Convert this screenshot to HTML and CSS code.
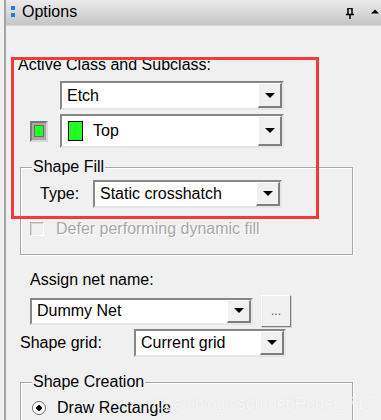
FILE: index.html
```html
<!DOCTYPE html>

<html lang="en">

    <head>
        <meta charset="UTF-8">
        <meta name="viewport" content="width=device-width, initial-scale=1.0">
        <title>Options</title>
        <link rel="stylesheet" href="styles.css">
    </head>

    <body>
        <div class="dock">
            <header class="titleBar">
                <span class="grip"><i></i><i></i></span>
                <span class="title">Options</span>
                <svg class="pin" width="8" height="11" viewBox="0 0 8 11">
                    <path d="M2 0.5h4v6h-4z M0 6.5h8 M4 6.5v4.5" fill="none" stroke="#000" stroke-width="1.5"/>
                </svg>
                <svg class="collapse" width="8" height="5" viewBox="0 0 8 5">
                    <path d="M0 4.5L4 0.5L8 4.5z" fill="#000"/>
                </svg>
            </header>

            <div class="content">
                <div class="label first">Active Class and Subclass:</div>

                <div class="classRow">
                    <div class="combo etch">
                        <span class="comboText">Etch</span>
                        <span class="dropButton"><i></i></span>
                    </div>
                </div>
                <div class="classRow">
                    <span class="swatchButton"><i></i></span>
                    <div class="combo subclass">
                        <span class="comboText"><i class="colorChip"></i>Top</span>
                        <span class="dropButton"><i></i></span>
                    </div>
                </div>

                <section class="groupBox shapeFill">
                    <span class="legend">Shape Fill</span>
                    <div class="fillRow">
                        <span class="rowLabel typeLabel">Type:</span>
                        <div class="combo typeCombo">
                            <span class="comboText">Static crosshatch</span>
                            <span class="dropButton"><i></i></span>
                        </div>
                    </div>
                    <div class="check disabled">
                        <span class="checkBox"></span>
                        Defer performing dynamic fill
                    </div>
                </section>

                <div class="label netLabel">Assign net name:</div>
                <div class="netRow">
                    <div class="combo netCombo">
                        <span class="comboText">Dummy Net</span>
                        <span class="dropButton"><i></i></span>
                    </div>
                    <button class="browse">...</button>
                </div>
                <div class="gridRow">
                    <span class="rowLabel gridLabel">Shape grid:</span>
                    <div class="combo gridCombo">
                        <span class="comboText">Current grid</span>
                        <span class="dropButton"><i></i></span>
                    </div>
                </div>

                <section class="groupBox shapeCreation">
                    <span class="legend">Shape Creation</span>
                    <div class="radio">
                        <span class="radioDot"></span>
                        Draw Rectangle
                    </div>
                </section>
            </div>
        </div>

        <!-- annotation drawn over the screenshot -->
        <div class="highlight"></div>
        <div class="watermark">https://blog.csdn.net/Roger_717</div>
    </body>

</html>
```

FILE: styles.css
```css
body {
    margin: 0px;
    padding: 0px;
    width: 381px;
    height: 420px;
    overflow: hidden;
    position: relative;
    background-color: #f0f0f0;
    font-family: "Liberation Sans", Arial, sans-serif;
    font-size: 16px;
    color: #000;
}

.dock {
    margin-left: 4px;
    height: 420px;
    border-left: 2px solid #a3a3a3;
    overflow: hidden;
}

/* title bar */
.titleBar {
    height: 26px;
    display: flex;
    align-items: center;
    padding-left: 5px;
    padding-right: 2px;
    background: linear-gradient(#ebebeb, #c5c5c5);
    border-bottom: 1px solid #d6d6d6;
    box-sizing: border-box;
}

.grip {
    display: flex;
    flex-direction: column;
    gap: 3px;
    width: 4px;
    margin-right: 7px;
    margin-top: -2px;
}

.grip i {
    display: block;
    width: 4px;
    height: 4px;
    background-color: #1a7ee0;
}

.title {
    flex: 1;
    margin-top: -2px;
}

.pin {
    margin-right: 17px;
    margin-top: 2px;
}

.collapse {
    margin-top: -3px;
}

/* panel content */
.content {
    padding-left: 12px;
}

.label {
    line-height: 18px;
}

.first {
    margin-top: 30px;
}

.classRow {
    display: flex;
    align-items: center;
    margin-left: 12px;
    margin-top: 4px;
}

.classRow:nth-of-type(2) {
    margin-top: 7px;
}

.etch {
    margin-left: 30px;
}

.swatchButton {
    width: 18px;
    height: 21px;
    box-sizing: border-box;
    border: 2px solid;
    border-color: #7a7a7a #d8d8d8 #d8d8d8 #7a7a7a;
    background-color: #a8a8a8;
    display: flex;
    justify-content: center;
    align-items: center;
    margin-right: 12px;
}

.swatchButton i {
    width: 10px;
    height: 12px;
    background-color: #22ff22;
    border: 1px solid #6b6b6b;
    box-sizing: border-box;
}

/* combo boxes */
.combo {
    display: flex;
    height: 29px;
    box-sizing: border-box;
    border: 2px solid;
    border-color: #878787 #e6e6e6 #e6e6e6 #878787;
    background-color: #ffffff;
    width: 224px;
}

.subclass {
    height: 34px;
}

.comboText {
    flex: 1;
    display: flex;
    align-items: center;
    padding-left: 5px;
    white-space: nowrap;
    overflow: hidden;
}

.colorChip {
    width: 15px;
    height: 20px;
    box-sizing: border-box;
    border: 1px solid #000;
    background-color: #22ff22;
    margin-left: 1px;
    margin-right: 10px;
}

.dropButton {
    width: 24px;
    box-sizing: border-box;
    background-color: #f0f0f0;
    border-top: 1px solid #ffffff;
    border-left: 1px solid #ffffff;
    border-right: 2px solid #7e7e7e;
    border-bottom: 2px solid #7e7e7e;
    display: flex;
    justify-content: center;
    align-items: center;
}

.dropButton i {
    width: 0;
    height: 0;
    border-left: 5px solid transparent;
    border-right: 5px solid transparent;
    border-top: 5px solid #000;
}

/* group boxes */
.groupBox {
    display: block;
    margin-left: 2px;
    width: 333px;
    box-sizing: border-box;
    border: 1px solid #a6a6a6;
    box-shadow: inset 1px 1px #ffffff, 1px 1px #ffffff;
}

.legend {
    display: block;
    width: fit-content;
    line-height: 18px;
    margin-top: -10px;
    margin-left: 11px;
    padding: 0 1px;
    background-color: #f0f0f0;
}

.shapeFill {
    margin-top: 19px;
    height: 88px;
}

.fillRow {
    display: flex;
    align-items: center;
    margin-top: 4px;
}

.rowLabel {
    line-height: 18px;
}

.typeLabel {
    margin-left: 19px;
    width: 53px;
}

.typeCombo {
    width: 189px;
    height: 28px;
}

.check {
    display: flex;
    align-items: center;
    margin-top: 12px;
    margin-left: 9px;
    line-height: 18px;
}

.checkBox {
    width: 14px;
    height: 14px;
    box-sizing: border-box;
    border: 1px solid;
    border-color: #b4b4b4 #ffffff #ffffff #b4b4b4;
    box-shadow: inset 1px 1px #d8d8d8;
    margin-right: 12px;
}

.disabled {
    color: #a8a8a8;
    text-shadow: 1px 1px #ffffff;
}

.netLabel {
    margin-top: 16px;
    margin-left: 12px;
}

.netRow {
    display: flex;
    align-items: center;
    margin-top: 6px;
    margin-left: 12px;
    height: 32px;
}

.netCombo {
    width: 223px;
    height: 27px;
}

.browse {
    width: 30px;
    height: 32px;
    margin-left: 8px;
    padding: 0;
    background-color: #f0f0f0;
    border: 1px solid;
    border-color: #ffffff #7e7e7e #7e7e7e #ffffff;
    box-shadow: 1px 1px #d0d0d0;
    font-family: "Liberation Sans", Arial, sans-serif;
    font-size: 12px;
    color: #555;
}

.gridRow {
    display: flex;
    align-items: center;
    margin-top: 2px;
    margin-left: 2px;
}

.gridLabel {
    width: 114px;
}

.gridCombo {
    width: 152px;
    height: 28px;
}

.shapeCreation {
    margin-top: 25px;
    height: 50px;
}

.radio {
    display: flex;
    align-items: center;
    margin-top: 8px;
    margin-left: 11px;
    line-height: 18px;
}

.radioDot {
    width: 14px;
    height: 14px;
    box-sizing: border-box;
    border-radius: 50%;
    border: 1px solid #6d6d6d;
    background: radial-gradient(circle, #000 2.5px, #ffffff 3px);
    margin-right: 11px;
}

/* overlays */
.highlight {
    position: absolute;
    left: 11px;
    top: 57px;
    width: 308px;
    height: 162px;
    box-sizing: border-box;
    border: 3px solid #f23a3a;
}

.watermark {
    position: absolute;
    left: 147px;
    top: 395px;
    color: rgba(255, 255, 255, 0.8);
    text-shadow: 0 0 1px rgba(0, 0, 0, 0.12);
    white-space: nowrap;
}
```
